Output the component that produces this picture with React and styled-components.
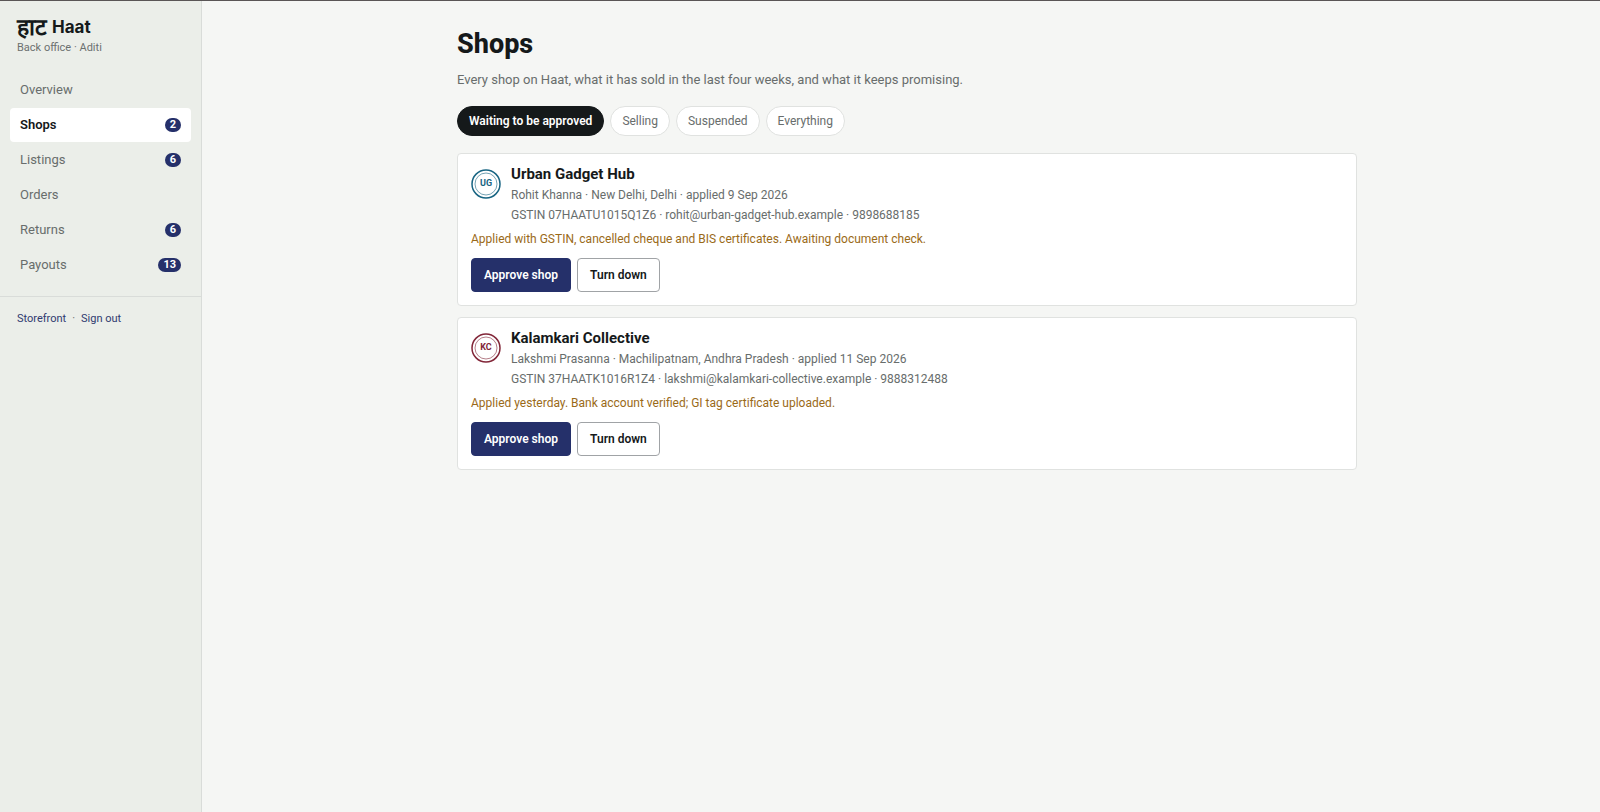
import React, { useState } from "react";
import styled, { createGlobalStyle, css } from "styled-components";

const sans = `Roboto, "Liberation Sans", sans-serif`;

const GlobalStyle = createGlobalStyle`
  *, *::before, *::after { box-sizing: border-box; }
  body {
    margin: 0;
    background: #f5f6f4;
    color: #15191a;
    font: 14px/20px ${sans};
  }
  h1, h2, p { margin: 0; }
  button { font-family: inherit; cursor: pointer; }
`;

const Shell = styled.div`
  display: flex;
  min-height: 100vh;
  border-top: 1px solid #5a5556;
`;

const Sidebar = styled.aside`
  flex: 0 0 202px;
  background: #ebeee9;
  border-right: 1px solid #d9dcd9;
`;

const Brand = styled.div`
  padding: 16px 17px 0;
`;

const BrandName = styled.div`
  display: flex;
  gap: 5px;
  font-family: Inter, ${sans};
  font-size: 17px;
  line-height: 21px;
  font-weight: 700;
`;

const BrandScript = styled.span`
  font-size: 23px;
  font-weight: 800;
`;

const BrandNote = styled.div`
  font-size: 11px;
  line-height: 20px;
  color: #6b7070;
`;

const Nav = styled.nav`
  display: flex;
  flex-direction: column;
  gap: 1px;
  padding: 15px 10px 14px;
`;

const NavLink = styled.a`
  display: flex;
  align-items: center;
  justify-content: space-between;
  height: 34px;
  padding: 0 10px;
  border-radius: 4px;
  font-size: 13px;
  color: #686d6c;
  text-decoration: none;
  ${(p) =>
    p.$active &&
    css`
      background: #fff;
      color: #15191a;
      font-weight: 600;
    `}
`;

const Badge = styled.span`
  padding: 0 5px;
  border-radius: 7px;
  background: #25306a;
  color: #fff;
  font-size: 11px;
  line-height: 14px;
  font-weight: 700;
`;

const SideFooter = styled.div`
  display: flex;
  gap: 6px;
  padding: 12px 17px;
  border-top: 1px solid #d9dcd9;
  font-size: 11px;
  color: #686d6c;
`;

const FooterLink = styled.a`
  color: #303a70;
  text-decoration: none;
`;

const Main = styled.main`
  flex: 1;
  min-width: 0;
  padding: 27px 0 28px 12px;
`;

const Content = styled.div`
  max-width: 900px;
  margin: 0 auto;
`;

const Title = styled.h1`
  font-size: 27px;
  line-height: 32px;
  font-weight: 800;
`;

const Lead = styled.p`
  margin-top: 10px;
  font-size: 13px;
  color: #686d6c;
`;

const Filters = styled.div`
  display: flex;
  flex-wrap: wrap;
  gap: 6px;
  margin: 16px 0 17px;
`;

const Pill = styled.button`
  height: 30px;
  padding: 0 11px;
  border: 1px solid ${(p) => (p.$active ? "#15191a" : "#e0e2e0")};
  border-radius: 15px;
  background: ${(p) => (p.$active ? "#15191a" : "#fff")};
  color: ${(p) => (p.$active ? "#fff" : "#686d6c")};
  font-size: 12px;
  font-weight: ${(p) => (p.$active ? 600 : 400)};
`;

const CardList = styled.div`
  display: grid;
  gap: 11px;
`;

const Card = styled.article`
  padding: 9px 13px 13px;
  border: 1px solid #e0e2e0;
  border-radius: 4px;
  background: #fff;
`;

const CardHead = styled.div`
  display: flex;
  gap: 10px;
`;

const Seal = styled.svg`
  flex: none;
  width: 30px;
  height: 30px;
  margin-top: 6px;
  color: ${(p) => p.$color};
`;

const ShopName = styled.h2`
  font-size: 15px;
  line-height: 22px;
  font-weight: 700;
`;

const Meta = styled.p`
  font-size: 12px;
  line-height: 20px;
  color: #686d6c;
`;

const Note = styled.p`
  margin-top: 4px;
  font-size: 12px;
  line-height: 20px;
  color: #9a6a18;
`;

const Actions = styled.div`
  display: flex;
  gap: 6px;
  margin-top: 9px;
`;

const Action = styled.button`
  height: 34px;
  padding: 0 12px;
  border: 1px solid ${(p) => (p.$primary ? "#25306a" : "#a0a3a6")};
  border-radius: 4px;
  background: ${(p) => (p.$primary ? "#25306a" : "#fff")};
  color: ${(p) => (p.$primary ? "#fff" : "#15191a")};
  font-size: 12px;
  font-weight: 600;
`;

const sections = [
  { name: "Overview" },
  { name: "Shops", count: 2 },
  { name: "Listings", count: 6 },
  { name: "Orders" },
  { name: "Returns", count: 6 },
  { name: "Payouts", count: 13 },
];

const filters = ["Waiting to be approved", "Selling", "Suspended", "Everything"];

const shops = [
  {
    initials: "UG",
    color: "#176482",
    name: "Urban Gadget Hub",
    about: "Rohit Khanna · New Delhi, Delhi · applied 9 Sep 2026",
    contact: "GSTIN 07HAATU1015Q1Z6 · rohit@urban-gadget-hub.example · 9898688185",
    note: "Applied with GSTIN, cancelled cheque and BIS certificates. Awaiting document check.",
  },
  {
    initials: "KC",
    color: "#822638",
    name: "Kalamkari Collective",
    about: "Lakshmi Prasanna · Machilipatnam, Andhra Pradesh · applied 11 Sep 2026",
    contact: "GSTIN 37HAATK1016R1Z4 · lakshmi@kalamkari-collective.example · 9888312488",
    note: "Applied yesterday. Bank account verified; GI tag certificate uploaded.",
  },
];

function ShopSeal({ initials, color }) {
  return (
    <Seal viewBox="0 0 30 30" $color={color} aria-hidden="true">
      <circle cx="15" cy="15" r="14" fill="none" stroke="currentColor" strokeWidth="1.5" />
      <circle cx="15" cy="15" r="11" fill="none" stroke="currentColor" strokeWidth="0.6" />
      <text
        x="15"
        y="17"
        textAnchor="middle"
        fontFamily="Roboto, sans-serif"
        fontSize="9"
        fontWeight="700"
        fill="currentColor"
      >
        {initials}
      </text>
    </Seal>
  );
}

function ShopCard({ shop }) {
  return (
    <Card>
      <CardHead>
        <ShopSeal initials={shop.initials} color={shop.color} />
        <div>
          <ShopName>{shop.name}</ShopName>
          <Meta>{shop.about}</Meta>
          <Meta>{shop.contact}</Meta>
        </div>
      </CardHead>
      <Note>{shop.note}</Note>
      <Actions>
        <Action type="button" $primary>Approve shop</Action>
        <Action type="button">Turn down</Action>
      </Actions>
    </Card>
  );
}

export default function App() {
  const [filter, setFilter] = useState(filters[0]);
  return (
    <>
      <GlobalStyle />
      <Shell>
        <Sidebar>
          <Brand>
            <BrandName>
              <BrandScript lang="hi">हाट</BrandScript>
              <span>Haat</span>
            </BrandName>
            <BrandNote>Back office · Aditi</BrandNote>
          </Brand>
          <Nav>
            {sections.map((s) => (
              <NavLink key={s.name} href="#" $active={s.name === "Shops"}>
                {s.name}
                {s.count && <Badge>{s.count}</Badge>}
              </NavLink>
            ))}
          </Nav>
          <SideFooter>
            <FooterLink href="#">Storefront</FooterLink>
            <span>·</span>
            <FooterLink href="#">Sign out</FooterLink>
          </SideFooter>
        </Sidebar>
        <Main>
          <Content>
            <Title>Shops</Title>
            <Lead>Every shop on Haat, what it has sold in the last four weeks, and what it keeps promising.</Lead>
            <Filters>
              {filters.map((f) => (
                <Pill key={f} type="button" $active={f === filter} onClick={() => setFilter(f)}>
                  {f}
                </Pill>
              ))}
            </Filters>
            <CardList>
              {shops.map((shop) => (
                <ShopCard key={shop.name} shop={shop} />
              ))}
            </CardList>
          </Content>
        </Main>
      </Shell>
    </>
  );
}
